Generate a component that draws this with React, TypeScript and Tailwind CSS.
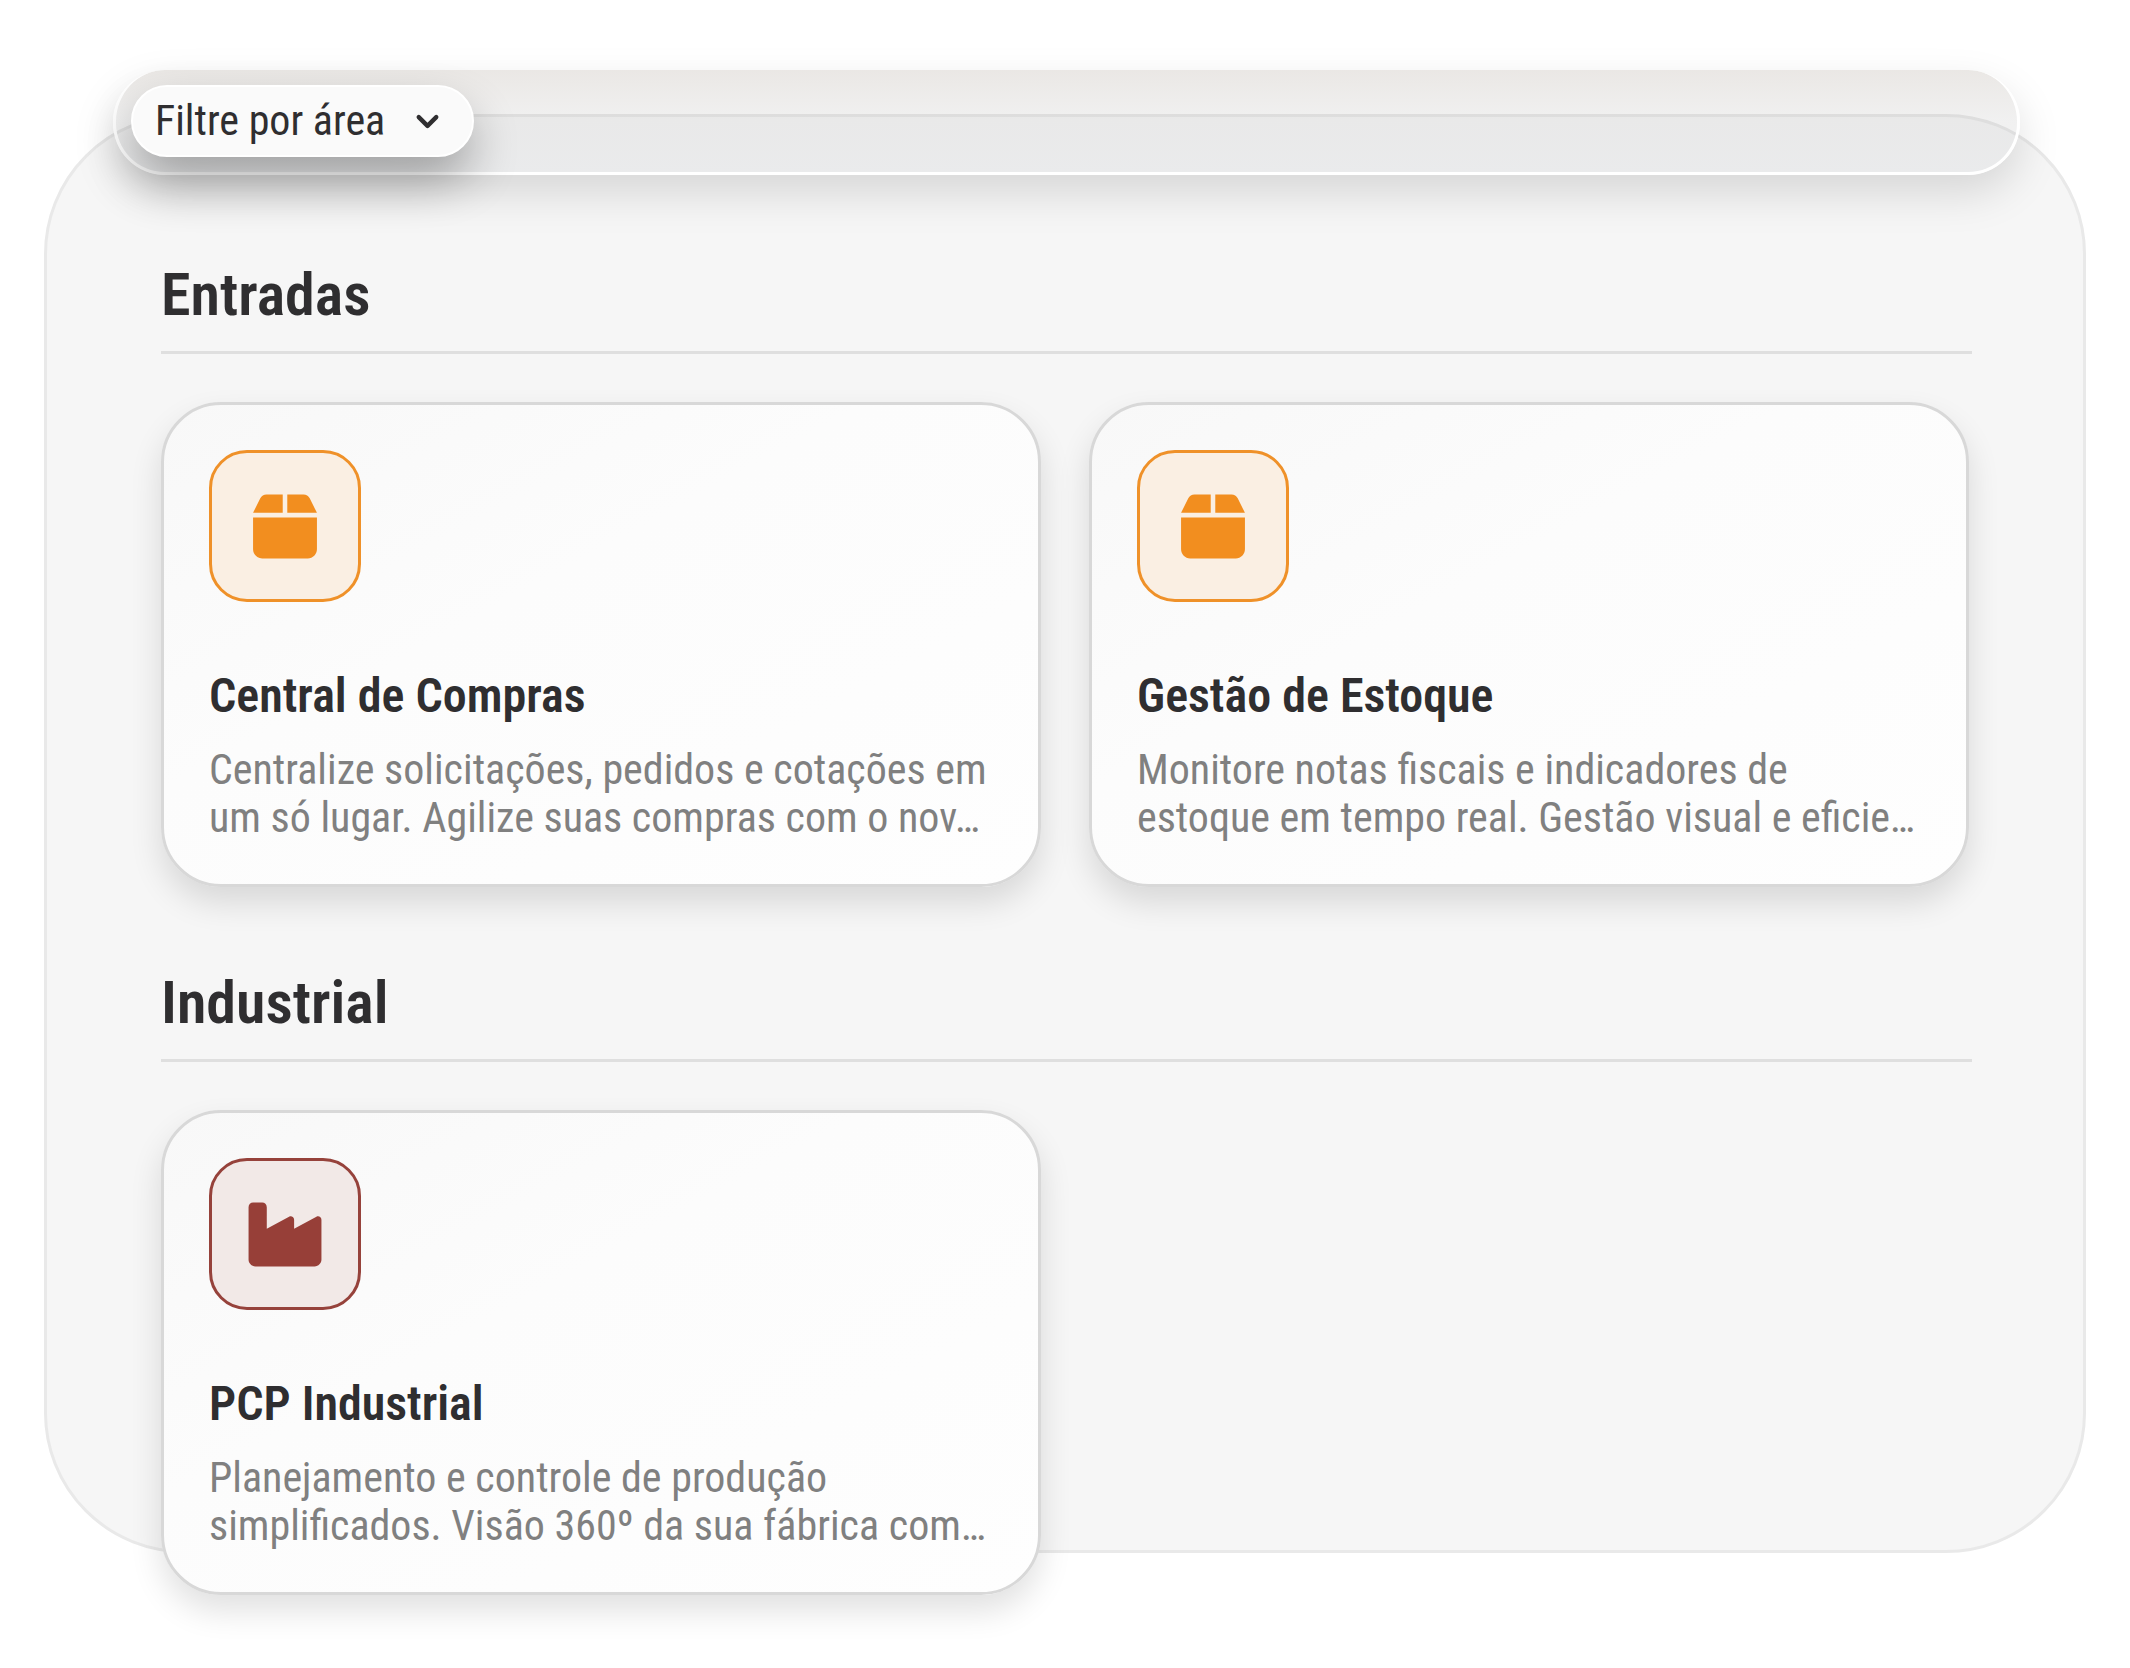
import { FaBox, FaIndustry } from "react-icons/fa6"
import { ChevronDown } from "lucide-react"
import type { IconType } from "react-icons"

interface Module {
	title: string
	description: string
	icon: IconType
	tone: string
}

interface Area {
	name: string
	modules: Module[]
}

const orange = "border-[#ef9129] bg-[#faefe3] text-[#f28e1f]"
const red = "border-[#96423b] bg-[#f2e9e7] text-[#973f38]"

const areas: Area[] = [
	{
		name: "Entradas",
		modules: [
			{
				title: "Central de Compras",
				description: "Centralize solicitações, pedidos e cotações em um só lugar. Agilize suas compras com o nov…",
				icon: FaBox,
				tone: orange,
			},
			{
				title: "Gestão de Estoque",
				description: "Monitore notas fiscais e indicadores de estoque em tempo real. Gestão visual e eficie…",
				icon: FaBox,
				tone: orange,
			},
		],
	},
	{
		name: "Industrial",
		modules: [
			{
				title: "PCP Industrial",
				description: "Planejamento e controle de produção simplificados. Visão 360º da sua fábrica com…",
				icon: FaIndustry,
				tone: red,
			},
		],
	},
]

const FilterBar = () => {
	return (
		<div className="relative z-10 mr-[66px] ml-[69px] flex rounded-[52px] border-r-3 border-b-3 border-l-3 border-white bg-linear-to-b from-[#a09488]/22 via-[#a0a0a0]/15 to-[#a0a6ae]/14 py-[15px] pl-[15px] shadow-[0_18px_44px_rgba(0,0,0,0.13)]">
			<button
				type="button"
				className="flex h-[72px] items-center gap-[25px] rounded-[36px] border-2 border-white bg-[#fafafa] pr-[27px] pl-[22px] text-[42px] leading-none shadow-[0_24px_48px_-2px_rgba(0,0,0,0.33)]">
				Filtre por área
				<ChevronDown className="size-[35px]" strokeWidth={3} />
			</button>
		</div>
	)
}

const ModuleCard = ({ title, description, icon: Icon, tone }: Module) => {
	return (
		<article className="rounded-[60px] border-3 border-[#d8d8d8] bg-linear-to-br from-[#f8f8f8] via-[#fcfcfc] via-40% to-[#fefefe] px-[45px] pt-[45px] pb-[42px] shadow-[0_16px_32px_rgba(0,0,0,0.12)]">
			<div className={`flex size-[152px] items-center justify-center rounded-[38px] border-3 ${tone}`}>
				<Icon className="h-[73px] w-[82px]" />
			</div>
			<h3 className="mt-[64px] text-[48px] leading-[60px] font-semibold">{title}</h3>
			<p className="mt-[20px] text-[42px] leading-[48px] text-[#808080]">{description}</p>
		</article>
	)
}

export default function App() {
	return (
		<main className="bg-white px-11 pt-[70px] pb-[116px] font-['Roboto_Condensed','Roboto',sans-serif] text-[#2f2e30]">
			<FilterBar />
			<div className="-mt-[61px] rounded-[140px] border-3 border-[#e9e9e9] bg-[#f6f6f6] pt-[142px] pr-[111px] pl-[114px]">
				{/* the last row of cards hangs over the panel's bottom edge */}
				<div className="-mb-[45px] flex flex-col gap-[80px]">
					{areas.map((area) => (
						<section key={area.name}>
							<h2 className="border-b-3 border-[#dfdfdf] pb-[20px] text-[60px] leading-[72px] font-semibold">
								{area.name}
							</h2>
							<div className="mt-12 grid grid-cols-2 gap-12 pr-[3px]">
								{area.modules.map((module) => (
									<ModuleCard key={module.title} {...module} />
								))}
							</div>
						</section>
					))}
				</div>
			</div>
		</main>
	)
}
